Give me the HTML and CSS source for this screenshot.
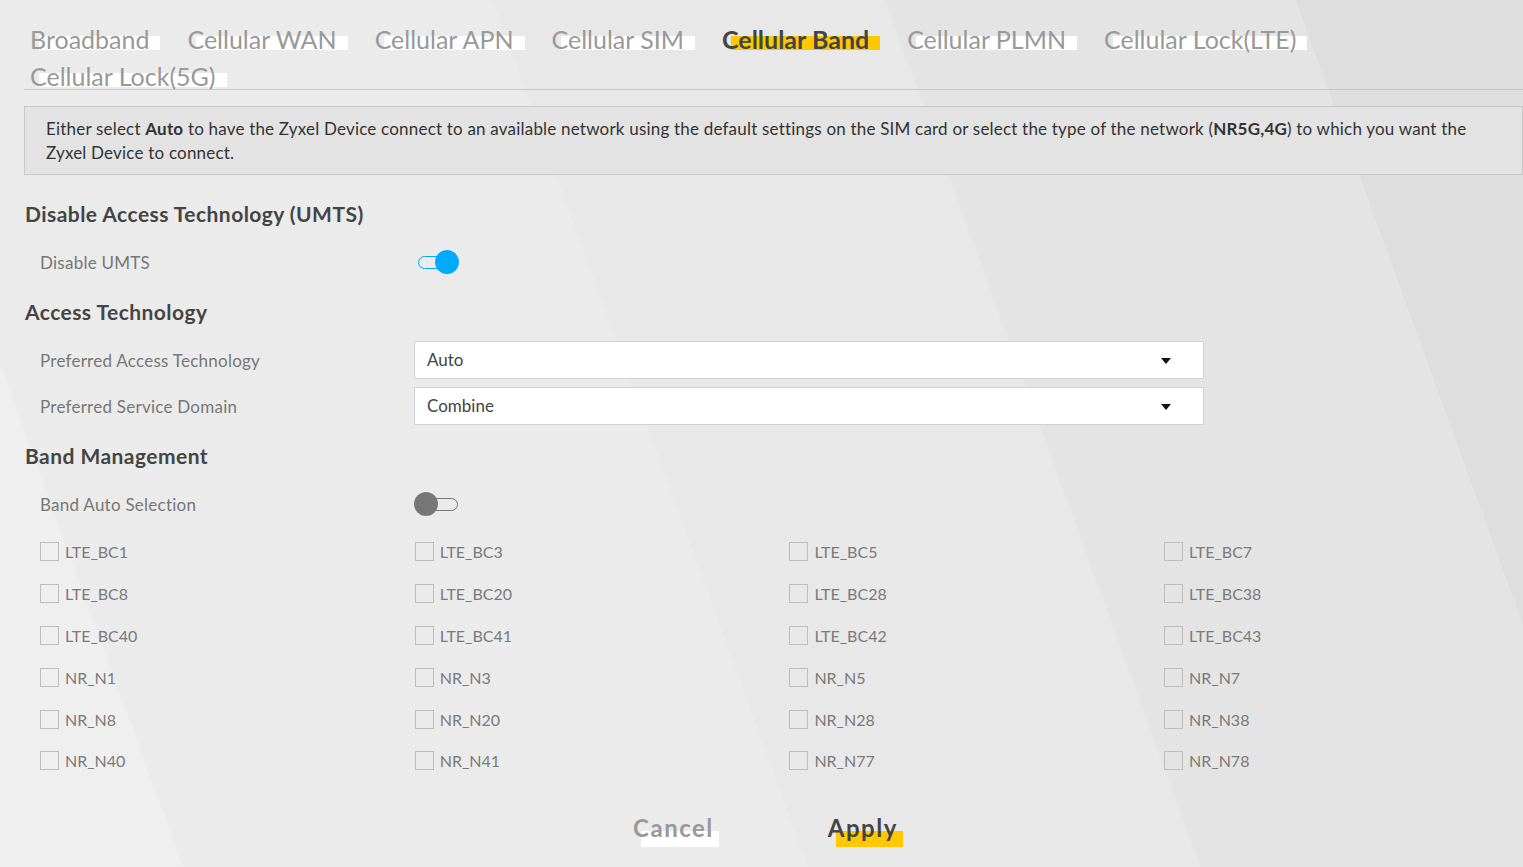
FILE: index.html
```html
<!doctype html>
<html lang="en">
<head>
    <meta charset="UTF-8">
    <title>Cellular Band</title>
    <link rel="stylesheet" href="styles.css">
</head>
<body>
<div class="page">
    <ul class="tabs">
        <li><a href="#">Broadband</a></li>
        <li><a href="#">Cellular WAN</a></li>
        <li><a href="#">Cellular APN</a></li>
        <li><a href="#">Cellular SIM</a></li>
        <li class="active"><a href="#">Cellular Band</a></li>
        <li><a href="#">Cellular PLMN</a></li>
        <li><a href="#">Cellular Lock(LTE)</a></li>
        <li><a href="#">Cellular Lock(5G)</a></li>
    </ul>

    <div class="info">
        Either select <b>Auto</b> to have the Zyxel Device connect to an available network using the default settings on the SIM card or select the type of the network (<b>NR5G,4G</b>) to which you want the Zyxel Device to connect.
    </div>

    <h3 class="section-title">Disable Access Technology (UMTS)</h3>
    <div class="field">
        <label>Disable UMTS</label>
        <span class="switch on"></span>
    </div>

    <h3 class="section-title">Access Technology</h3>
    <div class="field">
        <label>Preferred Access Technology</label>
        <div class="select">Auto<i class="caret"></i></div>
    </div>
    <div class="field">
        <label>Preferred Service Domain</label>
        <div class="select">Combine<i class="caret"></i></div>
    </div>

    <h3 class="section-title">Band Management</h3>
    <div class="field">
        <label>Band Auto Selection</label>
        <span class="switch"></span>
    </div>

    <div class="bands">
        <label class="band"><span class="box"></span>LTE_BC1</label>
        <label class="band"><span class="box"></span>LTE_BC3</label>
        <label class="band"><span class="box"></span>LTE_BC5</label>
        <label class="band"><span class="box"></span>LTE_BC7</label>
        <label class="band"><span class="box"></span>LTE_BC8</label>
        <label class="band"><span class="box"></span>LTE_BC20</label>
        <label class="band"><span class="box"></span>LTE_BC28</label>
        <label class="band"><span class="box"></span>LTE_BC38</label>
        <label class="band"><span class="box"></span>LTE_BC40</label>
        <label class="band"><span class="box"></span>LTE_BC41</label>
        <label class="band"><span class="box"></span>LTE_BC42</label>
        <label class="band"><span class="box"></span>LTE_BC43</label>
        <label class="band"><span class="box"></span>NR_N1</label>
        <label class="band"><span class="box"></span>NR_N3</label>
        <label class="band"><span class="box"></span>NR_N5</label>
        <label class="band"><span class="box"></span>NR_N7</label>
        <label class="band"><span class="box"></span>NR_N8</label>
        <label class="band"><span class="box"></span>NR_N20</label>
        <label class="band"><span class="box"></span>NR_N28</label>
        <label class="band"><span class="box"></span>NR_N38</label>
        <label class="band"><span class="box"></span>NR_N40</label>
        <label class="band"><span class="box"></span>NR_N41</label>
        <label class="band"><span class="box"></span>NR_N77</label>
        <label class="band"><span class="box"></span>NR_N78</label>
    </div>

    <div class="actions">
        <a href="#" class="btn cancel">Cancel</a>
        <a href="#" class="btn apply">Apply</a>
    </div>
</div>
</body>
</html>
```

FILE: styles.css
```css
/* reset */
*{
    margin:0;
    padding:0;
    box-sizing: border-box;
}
ul{
    list-style: none;
}
a{
    text-decoration: none;
}

body{
    font-family: "Lato", "DejaVu Sans", sans-serif;
    color: #444;
    overflow: hidden;
}

/* page with the diagonal light bands */
.page{
    min-height: 100vh;
    padding-left: 24px;
    background: linear-gradient(70deg,
        #efefef 172px, #ebebeb 172px,
        #ebebeb 759px, #e8e8e8 759px,
        #e8e8e8 1128px, #e4e4e4 1128px,
        #e4e4e4 1514px, #dedede 1514px);
}

/* tabs */
.tabs{
    display: flex;
    flex-wrap: wrap;
    row-gap: 11px;
    padding: 26px 0 0 6px;
    border-bottom: 1px solid #c8c8c8;
}
.tabs li{
    margin-right: 38px;
    font-size: 25px;
    line-height: 26px;
    height: 26px;
}
.tabs a{
    position: relative;
    display: block;
    color: #999;
    z-index: 0;
}
.tabs a:before{
    content: "";
    position: absolute;
    left: 9px;
    right: -11px;
    top: 10px;
    height: 14px;
    background: #fff;
    z-index: -1;
}
.tabs .active a{
    font-weight: bold;
    color: #444;
}
.tabs .active a:before{
    background: #ffc800;
}

/* info */
.info{
    margin: 16px 0 25px;
    background: #e3e3e3;
    border: 1px solid #c8c8c8;
    padding: 10px 30px 9px 21px;
    font-size: 17px;
    letter-spacing: 0.2px;
    line-height: 24px;
    color: #333;
}

.section-title{
    margin: 13px 0 0 1px;
    font-size: 21px;
    letter-spacing: 0.45px;
    font-weight: bold;
    line-height: 28px;
    color: #444;
}

/* rows */
.field{
    display: flex;
    align-items: center;
    height: 46px;
    padding-left: 16px;
}
.section-title + .field{
    margin-top: 11px;
}
.field label{
    width: 374px;
    font-size: 17px;
    letter-spacing: 0.25px;
    color: #777;
}

.switch{
    position: relative;
    display: inline-block;
    width: 40px;
    height: 13px;
    border: 1.5px solid #777;
    border-radius: 7px;
    margin-left: 4px;
}
.switch:after{
    content: "";
    position: absolute;
    left: -5.5px;
    top: -7px;
    width: 24px;
    height: 24px;
    border-radius: 50%;
    background: #777;
}
.switch.on{
    border-color: #00aaff;
}
.switch.on:after{
    left: auto;
    right: -1.5px;
    background: #00aaff;
}

.select{
    position: relative;
    width: 790px;
    height: 38px;
    background: #fff;
    border: 1px solid #cfd2d8;
    padding-left: 12px;
    font-size: 17px;
    line-height: 36px;
    color: #444;
}
.caret{
    position: absolute;
    right: 32px;
    top: 16px;
    border-left: 5px solid transparent;
    border-right: 5px solid transparent;
    border-top: 6px solid #111;
}

/* band grid */
.bands{
    display: grid;
    grid-template-columns: repeat(4, 374.7px);
    padding-left: 16px;
    margin-top: 4px;
}
.band{
    display: flex;
    align-items: center;
    height: 41.8px;
    font-size: 16px;
    color: #7a7a7a;
}
.band .box{
    width: 19px;
    height: 19px;
    border: 1px solid #bdbdbd;
    margin-right: 6px;
}

/* buttons */
.actions{
    display: flex;
    justify-content: center;
    gap: 114px;
    margin-top: 31px;
    padding-right: 16px;
}
.btn{
    position: relative;
    display: inline-block;
    z-index: 0;
    font-size: 24px;
    line-height: 30px;
    letter-spacing: 1.5px;
    font-weight: bold;
    color: #999;
}
.btn:before{
    content: "";
    position: absolute;
    left: 8px;
    right: -5px;
    top: 18px;
    height: 16px;
    background: #fff;
    z-index: -1;
}
.btn.apply{
    color: #444;
}
.btn.apply:before{
    background: #ffc800;
}
```
